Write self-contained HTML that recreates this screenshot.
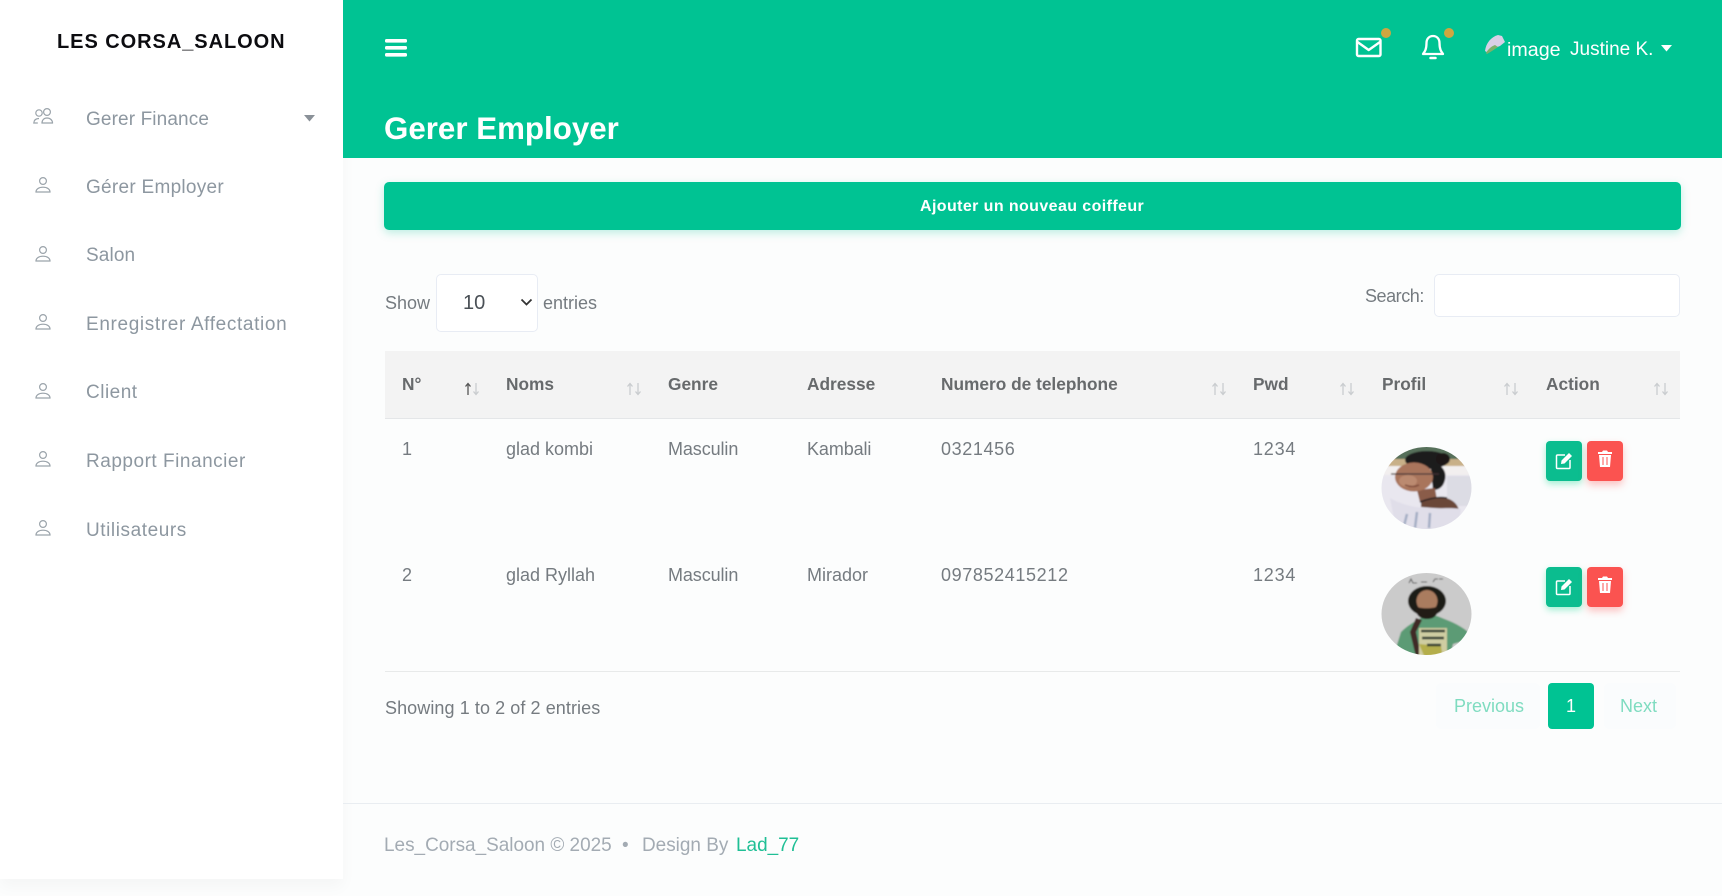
<!DOCTYPE html>
<html lang="fr"><head><meta charset="utf-8"><title>Gerer Employer</title>
<style>
html,body{margin:0;padding:0;width:1722px;height:896px;overflow:hidden;background:#fcfdfd;font-family:"Liberation Sans",sans-serif;color:#6c757d}
.t{position:absolute;white-space:nowrap;line-height:1}
.a{position:absolute}
#side{left:0;top:0;width:343px;height:879px;background:#fff;box-shadow:0 8px 14px rgba(0,0,0,.03)}
#head{left:343px;top:0;width:1379px;height:158px;background:#00c393}
.m{left:86px;font-size:19px;letter-spacing:.12px;color:#8d97a0}
.h{font-size:17.3px;font-weight:bold;color:#676a6c;top:376px}
.c{font-size:18px;color:#757b80}
.n{letter-spacing:.62px}
.r1{top:440px}.r2{top:566px}
.btn{position:absolute;width:36px;height:40px;border-radius:4px}
.ed{left:1546px;background:#0bbd8f;box-shadow:0 3px 7px rgba(30,220,150,.4)}
.de{left:1587px;background:#fb5350;box-shadow:0 4px 8px rgba(251,83,80,.35)}
.btn svg{position:absolute;left:9px;top:11px}
.de svg{top:9px}
</style></head><body>
<div class="a" id="side"></div>
<div class="a" id="head"></div>

<div class="t" style="left:57px;top:32px;font-size:20px;font-weight:bold;letter-spacing:.95px;color:#0c0c10">LES CORSA_SALOON</div>

<svg class="a" style="left:32px;top:108px" width="22" height="17" viewBox="0 0 22 17" fill="none" stroke="#9aa3aa" stroke-width="1.2"><circle cx="7" cy="5" r="3.200"/><circle cx="15" cy="4" r="3.400"/><path d="M10 15c0-3 2-5 5-5s5.500 2 5.500 5zM7 10.500c-3 0-5 1.500-5.200 4.500h4"/></svg>
<div class="t m" style="top:110px">Gerer Finance</div>
<svg class="a" style="left:304px;top:115px" width="12" height="7"><path d="M0 0h11L5.500 6.500z" fill="#8a9198"/></svg>

<svg class="a" style="left:34px;top:176px" width="18" height="18" viewBox="0 0 18 18" fill="none" stroke="#9aa3aa" stroke-width="1.2"><circle cx="9" cy="5" r="3.400"/><path d="M2 16c0-3 3-4.800 7-4.800s7 1.800 7 4.800z"/></svg>
<div class="t m" style="top:178px;letter-spacing:.28px">Gérer Employer</div>
<svg class="a" style="left:34px;top:245px" width="18" height="18" viewBox="0 0 18 18" fill="none" stroke="#9aa3aa" stroke-width="1.2"><circle cx="9" cy="5" r="3.400"/><path d="M2 16c0-3 3-4.800 7-4.800s7 1.800 7 4.800z"/></svg>
<div class="t m" style="top:246px">Salon</div>
<svg class="a" style="left:34px;top:313px" width="18" height="18" viewBox="0 0 18 18" fill="none" stroke="#9aa3aa" stroke-width="1.2"><circle cx="9" cy="5" r="3.400"/><path d="M2 16c0-3 3-4.800 7-4.800s7 1.800 7 4.800z"/></svg>
<div class="t m" style="top:315px;letter-spacing:.64px">Enregistrer Affectation</div>
<svg class="a" style="left:34px;top:382px" width="18" height="18" viewBox="0 0 18 18" fill="none" stroke="#9aa3aa" stroke-width="1.2"><circle cx="9" cy="5" r="3.400"/><path d="M2 16c0-3 3-4.800 7-4.800s7 1.800 7 4.800z"/></svg>
<div class="t m" style="top:383px;letter-spacing:.5px">Client</div>
<svg class="a" style="left:34px;top:450px" width="18" height="18" viewBox="0 0 18 18" fill="none" stroke="#9aa3aa" stroke-width="1.2"><circle cx="9" cy="5" r="3.400"/><path d="M2 16c0-3 3-4.800 7-4.800s7 1.800 7 4.800z"/></svg>
<div class="t m" style="top:452px;letter-spacing:.52px">Rapport Financier</div>
<svg class="a" style="left:34px;top:519px" width="18" height="18" viewBox="0 0 18 18" fill="none" stroke="#9aa3aa" stroke-width="1.2"><circle cx="9" cy="5" r="3.400"/><path d="M2 16c0-3 3-4.800 7-4.800s7 1.800 7 4.800z"/></svg>
<div class="t m" style="top:521px;letter-spacing:.57px">Utilisateurs</div>

<svg class="a" style="left:385px;top:38px" width="23" height="20" fill="#fff"><rect y="1" width="22" height="3.600" rx="1.500"/><rect y="8" width="22" height="3.600" rx="1.500"/><rect y="15" width="22" height="3.600" rx="1.500"/></svg>
<div class="t" style="left:384px;top:113px;font-size:31.300px;font-weight:bold;color:#fff">Gerer Employer</div>

<svg class="a" style="left:1355px;top:37px" width="28" height="21" viewBox="0 0 28 21" fill="none" stroke="#fff" stroke-width="2.400" stroke-linejoin="round"><rect x="2" y="2" width="23.500" height="17" rx="1.500"/><path d="M2.500 5l11.200 8 11.300-8"/></svg>
<div class="a" style="left:1381px;top:28px;width:10px;height:10px;border-radius:50%;background:#cfa640"></div>
<svg class="a" style="left:1421px;top:34px" width="24" height="27" viewBox="0 0 24 27" fill="none" stroke="#fff" stroke-width="2.300" stroke-linejoin="round"><path d="M12 2c-4 0-6.500 3-6.500 7 0 6-1.500 8.500-3.500 11h20c-2-2.500-3.500-5-3.500-11 0-4-2.500-7-6.500-7z"/><path d="M9.500 24h5" stroke-width="2.500" stroke-linecap="round"/></svg>
<div class="a" style="left:1444px;top:28px;width:10px;height:10px;border-radius:50%;background:#cfa640"></div>
<svg class="a" style="left:1484px;top:34px" width="23" height="21" viewBox="0 0 23 21"><path d="M1 17C2 9 7 3 14 1l4 1 3 6-5 4-8 3-4 4z" fill="#d8d0e6"/><path d="M2 19c2-4 6-7 9-8l3 2-6 4-5 3z" fill="#7eb06a"/></svg>
<div class="t" style="left:1507px;top:41px;font-size:19.700px;color:#fff">image</div>
<div class="t" style="left:1570px;top:40px;font-size:19px;color:#fff">Justine K.</div>
<svg class="a" style="left:1661px;top:45px" width="12" height="7"><path d="M0 0h11L5.500 6.500z" fill="#fff"/></svg>

<div class="a" style="left:384px;top:182px;width:1297px;height:48px;border-radius:5px;background:#00c393;box-shadow:0 3px 9px rgba(1,195,148,.25)"></div>
<div class="t" style="left:920px;top:199px;font-size:16px;letter-spacing:.4px;font-weight:bold;color:#fff">Ajouter un nouveau coiffeur</div>

<div class="t c" style="left:385px;top:294px">Show</div>
<div class="a" style="left:436px;top:274px;width:100px;height:56px;border:1px solid #e8ecf4;border-radius:5px;background:#fff"></div>
<div class="t" style="left:463px;top:293px;font-size:20px;color:#4a5056">10</div>
<svg class="a" style="left:520px;top:298px" width="13" height="9" fill="none" stroke="#333" stroke-width="1.800"><path d="M1.500 1.500l5 5 5-5"/></svg>
<div class="t c" style="left:543px;top:294px">entries</div>
<div class="t c" style="left:1365px;top:287px;letter-spacing:-.45px">Search:</div>
<div class="a" style="left:1434px;top:274px;width:244px;height:41px;border:1px solid #e8ecf4;border-radius:5px;background:#fff"></div>

<div class="a" style="left:385px;top:351px;width:1295px;height:67px;background:#f3f3f3;border-bottom:1px solid #e4e6e8"></div>
<div class="t h" style="left:402px">N°</div>
<div class="t h" style="left:506px">Noms</div>
<div class="t h" style="left:668px">Genre</div>
<div class="t h" style="left:807px">Adresse</div>
<div class="t h" style="left:941px">Numero de telephone</div>
<div class="t h" style="left:1253px">Pwd</div>
<div class="t h" style="left:1382px">Profil</div>
<div class="t h" style="left:1546px">Action</div>

<svg class="a" style="left:464px;top:382px" width="18" height="14" fill="none" stroke="#c9cccf" stroke-width="1.300"><path stroke="#555" d="M4 13V2M1.500 4.500L4 1.500l2.500 3"/><path d="M12 1v11M9.500 9.500l2.500 3 2.500-3"/></svg>
<svg class="a" style="left:626px;top:382px" width="18" height="14" fill="none" stroke="#c9cccf" stroke-width="1.300"><path d="M4 13V2M1.500 4.500L4 1.500l2.500 3M12 1v11M9.500 9.500l2.500 3 2.500-3"/></svg>
<svg class="a" style="left:1211px;top:382px" width="18" height="14" fill="none" stroke="#c9cccf" stroke-width="1.300"><path d="M4 13V2M1.500 4.500L4 1.500l2.500 3M12 1v11M9.500 9.500l2.500 3 2.500-3"/></svg>
<svg class="a" style="left:1339px;top:382px" width="18" height="14" fill="none" stroke="#c9cccf" stroke-width="1.300"><path d="M4 13V2M1.500 4.500L4 1.500l2.500 3M12 1v11M9.500 9.500l2.500 3 2.500-3"/></svg>
<svg class="a" style="left:1503px;top:382px" width="18" height="14" fill="none" stroke="#c9cccf" stroke-width="1.300"><path d="M4 13V2M1.500 4.500L4 1.500l2.500 3M12 1v11M9.500 9.500l2.500 3 2.500-3"/></svg>
<svg class="a" style="left:1653px;top:382px" width="18" height="14" fill="none" stroke="#c9cccf" stroke-width="1.300"><path d="M4 13V2M1.500 4.500L4 1.500l2.500 3M12 1v11M9.500 9.500l2.500 3 2.500-3"/></svg>

<div class="t c r1" style="left:402px">1</div>
<div class="t c r1" style="left:506px">glad kombi</div>
<div class="t c r1" style="left:668px;letter-spacing:-.1px">Masculin</div>
<div class="t c r1" style="left:807px;letter-spacing:-.1px">Kambali</div>
<div class="t c r1 n" style="left:941px">0321456</div>
<div class="t c r1 n" style="left:1253px;letter-spacing:.8px">1234</div>
<div class="t c r2" style="left:402px">2</div>
<div class="t c r2" style="left:506px">glad Ryllah</div>
<div class="t c r2" style="left:668px;letter-spacing:-.1px">Masculin</div>
<div class="t c r2" style="left:807px">Mirador</div>
<div class="t c r2 n" style="left:941px">097852415212</div>
<div class="t c r2 n" style="left:1253px;letter-spacing:.8px">1234</div>

<svg class="a" style="left:1375px;top:440px" width="105" height="95" viewBox="0 0 105 95">
<defs><clipPath id="k1"><ellipse cx="51.500" cy="48" rx="45" ry="41"/></clipPath><filter id="b1" x="-20%" y="-20%" width="140%" height="140%"><feGaussianBlur stdDeviation=".8"/></filter></defs>
<g clip-path="url(#k1)"><g filter="url(#b1)">
<rect width="105" height="95" fill="#e9e7ef"/>
<rect y="5" width="105" height="14" fill="#56705a"/>
<rect y="19" width="105" height="7" fill="#c8b088"/>
<rect y="26" width="105" height="9" fill="#f2efef"/>
<rect x="72" y="36" width="30" height="30" fill="#dcdce4"/>
<path d="M55 22C68 24 72 32 70 40 68 48 63 50 58 50Z" fill="#1f1a1c"/>
<ellipse cx="52" cy="20" rx="22" ry="9" fill="#1e1a1e"/>
<ellipse cx="68" cy="19" rx="7" ry="6" fill="#1a1618"/>
<path d="M42 50L60 48 62 60 45 62z" fill="#8a5c4a"/>
<path d="M46 62C55 56 70 56 76 60 80 62 83 66 84 70L46 67z" fill="#6b4638"/>
<path d="M45 62Q60 56 72 58" stroke="#2a2020" stroke-width="1.600" fill="none"/>
<ellipse cx="39" cy="37" rx="19" ry="14.500" fill="#a9745c"/>
<ellipse cx="33" cy="41" rx="9" ry="6" fill="#bb8a70"/>
<path d="M16 34H64" stroke="#3e3034" stroke-width="1.200"/>
<path d="M30 45q8 3 14 0" stroke="#7a4638" stroke-width="1.300" fill="none"/>
<path d="M15 58C25 64 40 68 52 68 65 69 75 67 86 69L82 95H22z" fill="#e0dee9"/>
<path d="M32 74l-3 12M42 72l-2 16M55 73l-1 15" stroke="#a4aec4" stroke-width="2.500"/>
</g></g></svg>

<svg class="a" style="left:1375px;top:566px" width="105" height="95" viewBox="0 0 105 95">
<defs><clipPath id="k2"><ellipse cx="51.500" cy="48" rx="45" ry="41"/></clipPath></defs>
<g clip-path="url(#k2)"><g filter="url(#b1)">
<rect width="105" height="95" fill="#cbcbcb"/>
<path d="M34 17l2-4 2 4h4M46 16h6M58 16l2-3h3M64 13h4" stroke="#555" stroke-width="1" fill="none"/>
<path d="M21 82L26 66C34 58 44 53 50 50H62C72 54 84 58 93 66L88 75 78 78 74 95H24z" fill="#5b9b74"/>
<ellipse cx="52" cy="35" rx="19" ry="15" fill="#1f1a18"/>
<ellipse cx="52" cy="35" rx="10.500" ry="11" fill="#aa7c5f"/>
<path d="M41 40c3 3 18 3 22 0 1 8-3 13-11 13s-12-5-11-13z" fill="#221c18"/>
<path d="M41 52L35 66l7 29h5l-6-29 6-12z" fill="#3f2c28"/>
<rect x="44" y="62" width="28" height="28" fill="#cfcdA2"/>
<path d="M44 78l6 14h18l-2-12z" fill="#b4ae4c"/>
<path d="M46 65h24M47 72h22M52 79h14" stroke="#2f3a30" stroke-width="2.600"/>
</g></g></svg>

<div class="btn ed" style="top:441px"><svg width="18" height="18" viewBox="0 0 18 18" fill="none" stroke="#fff" stroke-width="1.500"><path d="M10 3H2.500a1 1 0 0 0-1 1v11.500a1 1 0 0 0 1 1H14a1 1 0 0 0 1-1V8"/><path d="M6.500 8.500L14 1l3 3-7.500 7.500-3.500 .5z" fill="#fff" stroke="none"/></svg></div>
<div class="btn de" style="top:441px"><svg width="18" height="18" viewBox="0 0 18 18" fill="#fff"><path d="M2 2h4l1-1.500h4L12 2h4v2H2z"/><path d="M3 5h12l-1 12H4zM6.500 7v8h1V7zm4 0v8h1V7z" fill-rule="evenodd"/></svg></div>
<div class="btn ed" style="top:567px"><svg width="18" height="18" viewBox="0 0 18 18" fill="none" stroke="#fff" stroke-width="1.500"><path d="M10 3H2.500a1 1 0 0 0-1 1v11.500a1 1 0 0 0 1 1H14a1 1 0 0 0 1-1V8"/><path d="M6.500 8.500L14 1l3 3-7.500 7.500-3.500 .5z" fill="#fff" stroke="none"/></svg></div>
<div class="btn de" style="top:567px"><svg width="18" height="18" viewBox="0 0 18 18" fill="#fff"><path d="M2 2h4l1-1.500h4L12 2h4v2H2z"/><path d="M3 5h12l-1 12H4zM6.500 7v8h1V7zm4 0v8h1V7z" fill-rule="evenodd"/></svg></div>

<div class="a" style="left:385px;top:671px;width:1295px;height:1px;background:#e8eaea"></div>
<div class="t c" style="left:385px;top:699px;letter-spacing:.08px">Showing 1 to 2 of 2 entries</div>
<div class="a" style="left:1436px;top:683px;width:104px;height:46px;border-radius:5px;background:#fafcfd"></div>
<div class="t" style="left:1454px;top:697px;font-size:18px;color:#7fdcc0">Previous</div>
<div class="a" style="left:1548px;top:683px;width:46px;height:46px;border-radius:4px;background:#00c393"></div>
<div class="t" style="left:1566px;top:697px;font-size:18px;color:#fff">1</div>
<div class="a" style="left:1604px;top:683px;width:72px;height:46px;border-radius:5px;background:#fafcfd"></div>
<div class="t" style="left:1620px;top:697px;font-size:18px;color:#7fdcc0">Next</div>

<div class="a" style="left:343px;top:803px;width:1379px;height:1px;background:#e9edf1"></div>
<div class="t" style="left:384px;top:837px;font-size:18.950px;color:#a3abb3">Les_Corsa_Saloon © 2025</div>
<div class="t" style="left:622px;top:837px;font-size:18.950px;color:#a3abb3">•</div>
<div class="t" style="left:642px;top:837px;font-size:18.950px;color:#a3abb3">Design By</div>
<div class="t" style="left:736px;top:837px;font-size:18.950px;color:#1fbf95">Lad_77</div>
</body></html>
